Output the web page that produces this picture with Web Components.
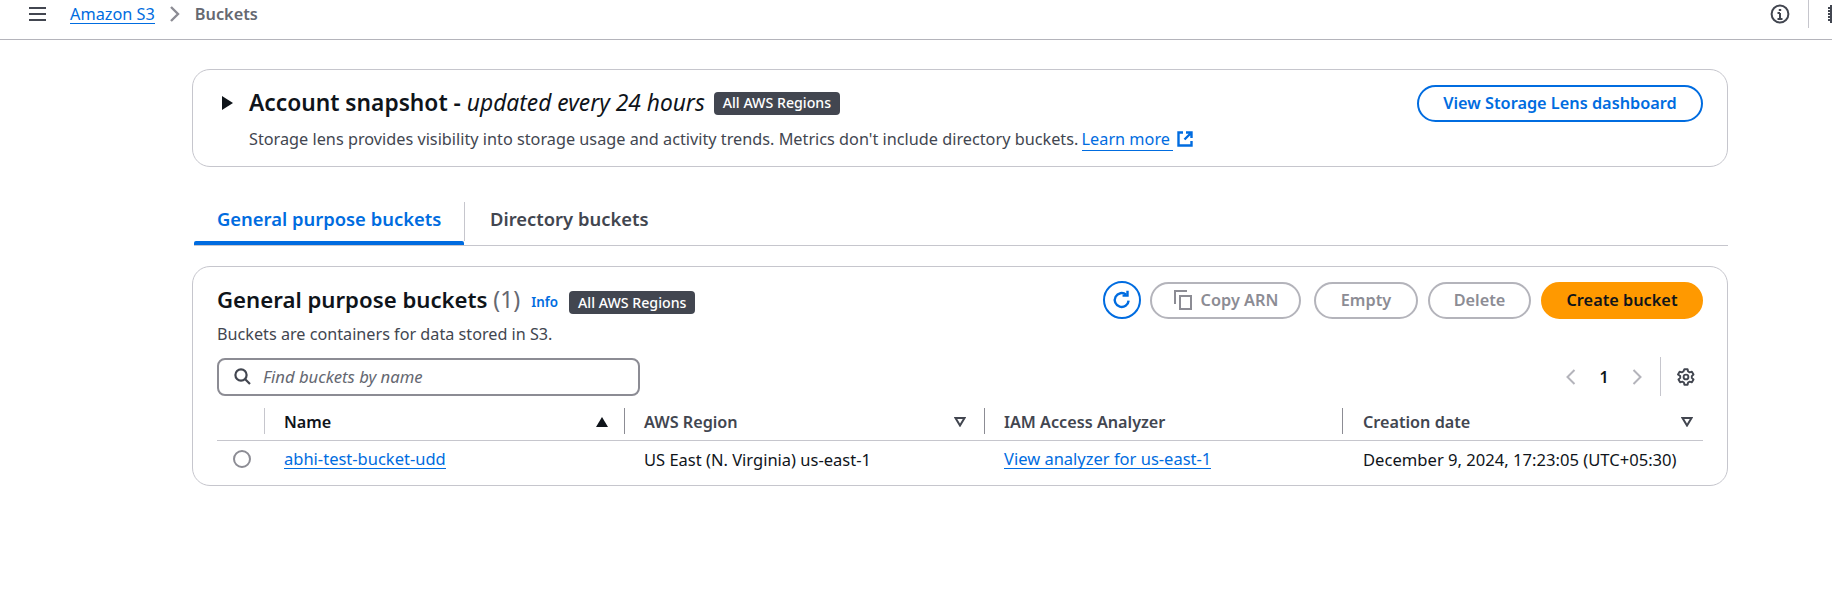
<!DOCTYPE html>
<html lang="en">
<head>
<meta charset="UTF-8" />
<title>Buckets | S3</title>
<style>
  html, body { margin: 0; height: 100%; background: #fff; overflow: hidden; }
  body { font-family: "Noto Sans", Roboto, sans-serif; font-size: 16px; color: #0f141a; }
</style>
</head>
<body>

<s3-top-bar></s3-top-bar>
<s3-page>
  <s3-snapshot></s3-snapshot>
  <s3-tabs></s3-tabs>
  <s3-buckets></s3-buckets>
</s3-page>

<script>
  function define(name, html) {
    customElements.define(name, class extends HTMLElement {
      constructor() {
        super();
        this.attachShadow({ mode: 'open' }).innerHTML = html;
      }
    });
  }

  define('s3-badge', `
    <style>
      :host {
        display: inline-flex; align-items: center; height: 23px; padding: 0 9px;
        background: #424650; color: #fff; border-radius: 4px;
        font-size: 14.2px; font-weight: 500; font-style: normal; white-space: nowrap;
      }
    </style>
    <slot></slot>`);

  define('s3-button', `
    <style>
      :host { display: inline-flex; }
      div {
        box-sizing: border-box; width: 100%; height: 37px; padding: 0 8px 1px; border-radius: 20px;
        display: flex; align-items: center; justify-content: center; gap: 8px;
        border: 2px solid #b4b4bb; color: #8c8c94;
        font-size: 16.3px; font-weight: 600; white-space: nowrap;
      }
      :host([kind=normal]) div { border-color: #006ce0; color: #006ce0; }
      :host([kind=primary]) div { border-color: #ff9900; background: #ff9900; color: #0f141a; }
      :host([kind=icon]) div { padding: 0; width: 38px; height: 38px; border-color: #006ce0; color: #006ce0; }
      ::slotted(svg) { display: block; }
    </style>
    <div><slot></slot></div>`);

  define('s3-top-bar', `
    <style>
      :host {
        display: flex; align-items: center; box-sizing: border-box; height: 40px;
        padding: 0 0 11px 29px; border-bottom: 1px solid #b4b4bb;
        overflow: hidden; font-size: 16.3px; color: #5f6b7a;
      }
      a { color: #006ce0; text-decoration: none; border-bottom: 1px solid #006ce0; margin-left: 23px; line-height: 18px; }
      b { font-weight: 600; color: #656871; }
      .chev { margin: 0 14px 0 14px; }
      .space { flex: 1; }
      .rule { width: 1px; height: 28px; background: #c6c6cd; margin: 0 19px 0 18px; flex: none; }
      svg { display: block; flex: none; }
      .gear { margin-right: -16px; }
    </style>
    <svg width="18" height="16" viewBox="0 0 18 16" fill="none" stroke="#424650" stroke-width="2.2"><path d="M0 2h17M0 8h17M0 14h17"/></svg>
    <a>Amazon S3</a>
    <svg class="chev" width="12" height="16" viewBox="0 0 12 16" fill="none" stroke="#8c8c94" stroke-width="2.4"><path d="M2 1l7 7-7 7"/></svg>
    <b>Buckets</b>
    <span class="space"></span>
    <svg width="20" height="20" viewBox="0 0 20 20" fill="none" stroke="#424650" stroke-width="2"><circle cx="10" cy="10" r="8.4"/><path d="M10 9v6M7.5 15h5M7.5 9H10"/><path d="M10 5v2" stroke-width="2.4"/></svg>
    <span class="rule"></span>
    <svg class="gear" width="20" height="20" viewBox="0 0 20 20" fill="none" stroke="#424650" stroke-width="2"><path d="M0 4h4M0 7h4M0 10h4M0 13h4M0 16h4"/><rect x="3" y="2" width="14" height="16"/></svg>`);

  define('s3-page', `
    <style>
      :host { display: block; padding: 29px 104px 0 192px; }
    </style>
    <slot></slot>`);

  define('s3-snapshot', `
    <style>
      :host {
        display: flex; box-sizing: border-box; height: 98px; padding: 15px 24px 0 29px;
        border: 1px solid #c6c6cd; border-radius: 18px;
      }
      .arrow { width: 0; height: 0; border-left: 11px solid #0f141a; border-top: 7px solid transparent; border-bottom: 7px solid transparent; margin: 11px 16px 0 0; flex: none; }
      .text { flex: 1; }
      h2 { margin: 4px 0 0; font-size: 22.75px; line-height: 28px; font-weight: 600; display: flex; align-items: center; }
      em { font-weight: 400; margin-left: 6px; }
      s3-badge { margin-left: 9px; }
      p { margin: 12px 0 0; font-size: 16.25px; line-height: 20px; color: #424650; white-space: nowrap; }
      a { color: #006ce0; text-decoration: none; border-bottom: 1px solid #006ce0; padding-right: 3px; margin-left: -1px; }
      p svg { vertical-align: -2px; margin-left: 0; }
      s3-button { flex: none; }
    </style>
    <span class="arrow"></span>
    <div class="text">
      <h2>Account snapshot -<em>updated every 24 hours</em><s3-badge>All AWS Regions</s3-badge></h2>
      <p>Storage lens provides visibility into storage usage and activity trends. Metrics don't include directory buckets. <a>Learn more</a> <svg width="16" height="16" viewBox="0 0 16 16" fill="none" stroke="#006ce0" stroke-width="2.4"><path d="M6 1.5H1.5v13h13V10M9 1.5h5.5V7M14 2L7.5 8.5"/></svg></p>
    </div>
    <s3-button kind="normal" style="width:286px"><span>View Storage Lens dashboard</span></s3-button>`);

  define('s3-tabs', `
    <style>
      :host {
        display: flex; box-sizing: border-box; height: 44px; margin-top: 35px; margin-left: 2px;
        border-bottom: 1px solid #c6c6cd; font-size: 18.4px; font-weight: 600; color: #424650;
      }
      .tab { display: flex; align-items: center; padding: 0 25px 6px; position: relative; box-sizing: border-box; white-space: nowrap; }
      .on { width: 270px; color: #006ce0; padding-left: 23px; height: 43px; padding-bottom: 10px; }
      .on::after { content: ""; position: absolute; left: 0; right: 0; bottom: 0; height: 4px; background: #006ce0; border-radius: 2px 2px 0 0; }
      .rest { border-left: 1px solid #c6c6cd; height: 39px; padding-bottom: 6px; }
    </style>
    <div class="tab on">General purpose buckets</div>
    <div class="tab rest">Directory buckets</div>`);

  define('s3-buckets', `
    <style>
      :host {
        display: block; box-sizing: border-box; height: 220px; margin-top: 20px;
        padding: 14px 24px 0 24px; border: 1px solid #c6c6cd; border-radius: 18px;
      }
      .head { display: flex; align-items: flex-start; height: 38px; }
      h2 { margin: 4px 0 0; font-size: 22.2px; line-height: 28px; font-weight: 600; white-space: nowrap; }
      h2 span { font-weight: 400; color: #656871; font-size: 23px; }
      .info { margin: 12px 0 0 11px; font-size: 13.4px; font-weight: 600; color: #006ce0; }
      .head s3-badge { margin: 10px 0 0 11px; }
      .actions { margin-left: auto; display: flex; gap: 10px; align-items: center; }
      .desc { margin: 5px 0 0; font-size: 16.2px; line-height: 20px; color: #424650; }
      .tools { display: flex; align-items: center; margin-top: 13px; height: 39px; }
      .search {
        box-sizing: border-box; width: 423px; height: 38px; display: flex; align-items: center; gap: 12px;
        padding-left: 15px; border: 2px solid #8c8c94; border-radius: 8px;
        font-style: italic; font-size: 16.7px; color: #656871;
      }
      .pager { margin-left: auto; display: flex; align-items: center; margin-right: 8px; }
      .pager b { font-weight: 600; font-size: 16px; width: 54px; text-align: center; }
      .rule { width: 1px; height: 39px; background: #c6c6cd; margin: 0 16px 0 17px; }
      svg { display: block; flex: none; }
      .row {
        display: grid; grid-template-columns: 47px 360px 360px 358px 1fr;
        border-bottom: 1px solid #c6c6cd; height: 41px; align-items: center;
        box-sizing: border-box; font-weight: 600; color: #424650; padding-top: 1px; font-size: 16.2px;
      }
      .row > div { display: flex; align-items: center; justify-content: space-between; height: 26px; border-left: 1px solid #8c8c94; padding: 3px 10px 0 19px; box-sizing: border-box; white-space: nowrap; }
      .row > div:first-child { border: 0; }
      .row > div:nth-child(2) { border-left-color: #c6c6cd; }
      .row > .name { color: #0f141a; padding-left: 19px; padding-right: 16px; }
      .row > .region { padding-right: 18px; }
      .row > .date { padding-left: 20px; }
      .body { border: 0; height: 36px; font-weight: 400; color: #0f141a; padding-top: 0; font-size: 16.5px; }
      .body > div { border: 0; height: auto; justify-content: flex-start; padding: 0 0 0 20px; }
      .body > div:last-child { font-size: 16.6px; padding-left: 21px; }
      .body a { color: #006ce0; border-bottom: 1px solid #006ce0; line-height: 18px; }
      .radio { box-sizing: border-box; width: 18px; height: 18px; border: 2px solid #8c8c94; border-radius: 50%; margin-left: 16px; }
    </style>
    <div class="head">
      <h2>General purpose buckets <span>(1)</span></h2>
      <span class="info">Info</span>
      <s3-badge>All AWS Regions</s3-badge>
      <div class="actions">
        <s3-button kind="icon"><svg width="22" height="22" viewBox="0 0 20 20" fill="none" stroke="#006ce0" stroke-width="2.2"><path d="M16 10.5a6.3 6.3 0 1 1-2.2-5.3"/><path d="M15 1.5V6h-4.5"/></svg></s3-button>
        <s3-button style="width:151px;margin-left:-1px"><svg width="20" height="20" viewBox="0 0 20 20" fill="none" stroke="#8c8c94" stroke-width="2"><path d="M7 6h11v13H7zM2 14V1h12"/></svg><span>Copy ARN</span></s3-button>
        <s3-button style="width:104px;margin-left:3px"><span>Empty</span></s3-button>
        <s3-button style="width:103px"><span>Delete</span></s3-button>
        <s3-button kind="primary" style="width:162px"><span>Create bucket</span></s3-button>
      </div>
    </div>
    <p class="desc">Buckets are containers for data stored in S3.</p>
    <div class="tools">
      <div class="search"><svg width="17" height="17" viewBox="0 0 17 17" fill="none" stroke="#424650" stroke-width="2.2"><circle cx="7" cy="7" r="5.6"/><path d="M11 11l5 5"/></svg><span>Find buckets by name</span></div>
      <div class="pager">
        <svg width="12" height="16" viewBox="0 0 12 16" fill="none" stroke="#b4b4bb" stroke-width="2"><path d="M9.5 1l-7 7 7 7"/></svg>
        <b>1</b>
        <svg width="12" height="16" viewBox="0 0 12 16" fill="none" stroke="#b4b4bb" stroke-width="2"><path d="M2.5 1l7 7-7 7"/></svg>
        <span class="rule"></span>
        <svg width="18" height="18" viewBox="0 0 18 18" fill="none" stroke="#424650" stroke-width="1.9" stroke-linejoin="round"><circle cx="9" cy="9" r="2.4"/><path d="M7.4 1.2h3.2l.5 2.3 1.6.9 2.2-.7 1.6 2.8-1.7 1.6v1.8l1.7 1.6-1.6 2.8-2.2-.7-1.6.9-.5 2.3H7.4l-.5-2.3-1.6-.9-2.2.7-1.6-2.8 1.7-1.6V8.1L1 6.5l1.6-2.8 2.2.7 1.6-.9z"/></svg>
      </div>
    </div>
    <div class="row" style="margin-top:4px">
      <div></div>
      <div class="name">Name <svg width="12" height="10" viewBox="0 0 12 10"><path d="M6 0l6 10H0z" fill="#0f141a"/></svg></div>
      <div class="region">AWS Region <svg width="12" height="10" viewBox="0 0 12 10" fill="none" stroke="#424650" stroke-width="2"><path d="M1.5 1h9L6 8.5z"/></svg></div>
      <div>IAM Access Analyzer</div>
      <div class="date">Creation date <svg width="12" height="10" viewBox="0 0 12 10" fill="none" stroke="#424650" stroke-width="2"><path d="M1.5 1h9L6 8.5z"/></svg></div>
    </div>
    <div class="row body">
      <span class="radio"></span>
      <div><a>abhi-test-bucket-udd</a></div>
      <div>US East (N. Virginia) us-east-1</div>
      <div><a>View analyzer for us-east-1</a></div>
      <div>December 9, 2024, 17:23:05 (UTC+05:30)</div>
    </div>`);
</script>
</body>
</html>
